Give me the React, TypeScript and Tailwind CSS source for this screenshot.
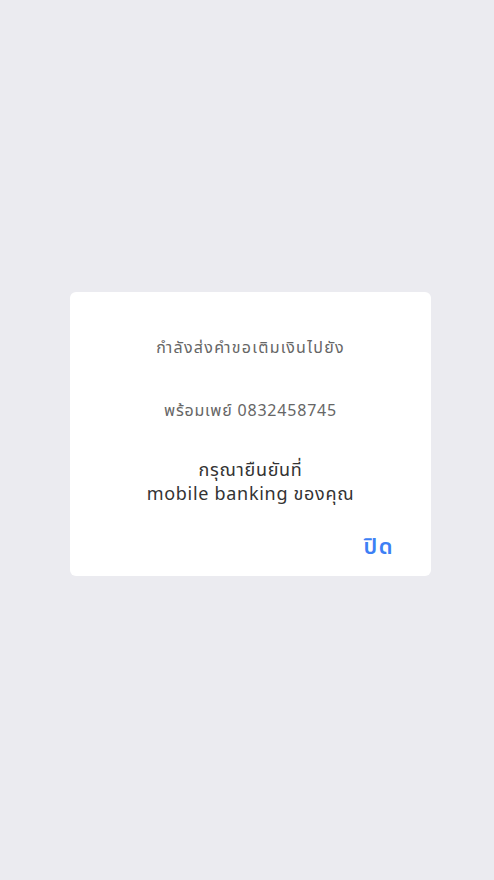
export default function App() {
  return (
    <div className="min-h-[880px] w-full bg-[#ebebf0] flex items-center justify-center font-['Noto_Sans','Noto_Sans_Thai',sans-serif]">
      <div className="w-[361px] bg-white rounded-[6px] ml-[7px] mt-[-13px] pt-[44px] pb-[17px] flex flex-col items-center">
        <p className="text-[16px] leading-[22px] tracking-[1.3px] text-[#666]">กำลังส่งคำขอเติมเงินไปยัง</p>
        <p className="mt-[41px] text-[16px] leading-[22px] tracking-[0.8px] text-[#666]">พร้อมเพย์ 0832458745</p>
        <div className="mt-[36px] text-center text-[18px] leading-[24px] tracking-[0.7px] text-[#333]">
          <p>กรุณายืนยันที่</p>
          <p>mobile banking ของคุณ</p>
        </div>
        <div className="w-full flex justify-end pr-[37px] mt-[26px]">
          <button className="text-[22px] leading-[28px] tracking-[1.5px] font-semibold text-[#3d7ff5]">ปิด</button>
        </div>
      </div>
    </div>
  )
}
